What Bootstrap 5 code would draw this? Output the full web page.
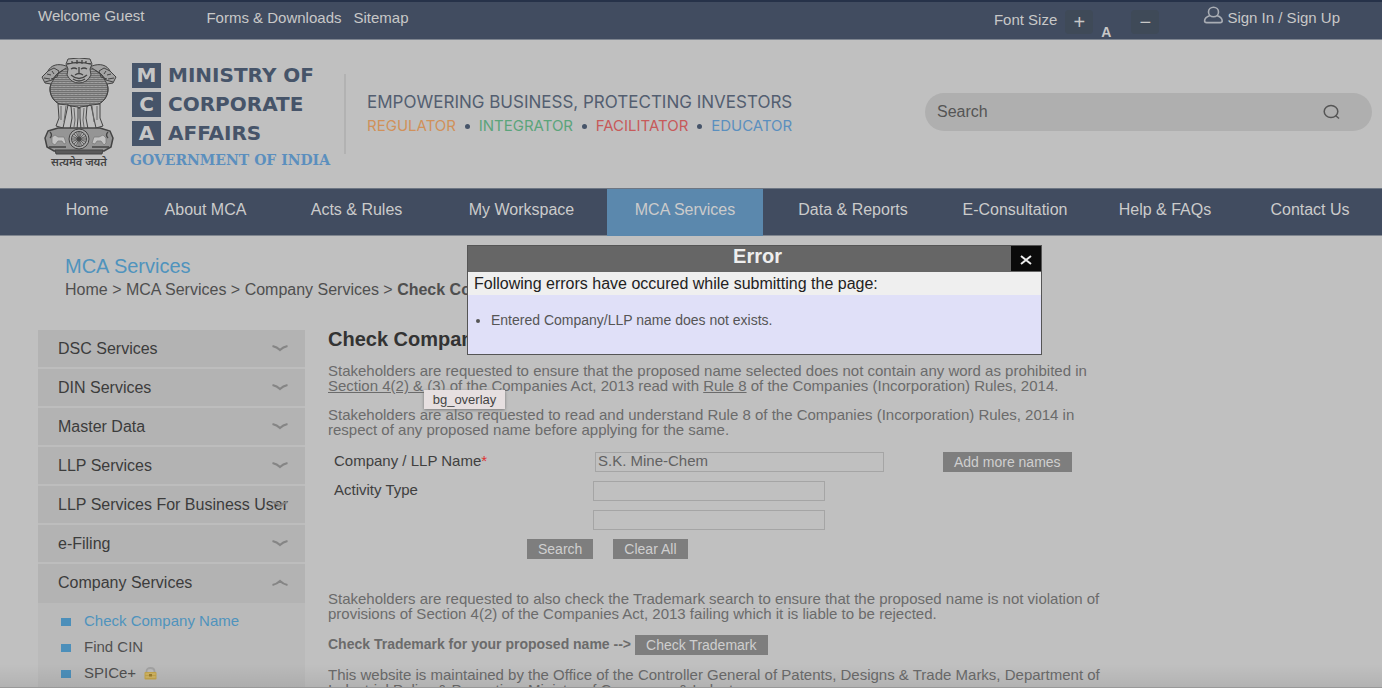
<!DOCTYPE html>
<html lang="en">
<head>
<meta charset="utf-8">
<meta name="viewport" content="width=device-width, initial-scale=1">
<title>Check Company Name - Ministry of Corporate Affairs</title>
<link href="https://cdn.jsdelivr.net/npm/bootstrap@5.3.0/dist/css/bootstrap.min.css" rel="stylesheet">
<style>
:root{--navy:#414c60;--grey:#c0c0c0;--sky:#4f93bd;--ink:#3f3f3f;--soft:#6b6b6b}
html{background:var(--grey)}
body{font-family:"Liberation Sans",Arial,sans-serif;font-size:15px;color:var(--soft);background:var(--grey);height:100vh;overflow:hidden;position:relative}
a{color:inherit;text-decoration:none}
.topbar{background:var(--navy);color:#c8c8c8;height:40px;border-top:2px solid #263249;border-bottom:1px solid #7d848f;line-height:20px;padding:0 42px 0 38px}
.top-links{margin-left:62px;padding-top:6px;gap:12px}
.size-btn{background:#3f4a58;border:0;border-radius:4px;color:#c8c8c8;width:28px;height:24px;line-height:24px;padding:0;font-size:20px}
.size-a{line-height:28px;font-size:14px}
.sign-link{margin-left:44px;padding-top:4px}
.sign-link span{padding-top:2px}
.masthead{height:148px;padding:0 10px 0 40px}
.emblem{width:78px;padding-top:18px}
.motto{font:600 11px/14px "Noto Sans Devanagari","Noto Sans",sans-serif;color:#444;text-align:center}
.wordmark{margin-left:12px;padding-top:23px}
.mca-tile{background:#465469;color:#c6c6c6;width:29px;height:25px;margin:0 7px 0 2px;font:700 20px/25px "DejaVu Sans",sans-serif;text-align:center}
.mca-word{color:#465469;font:700 20px/24px "DejaVu Sans",sans-serif;white-space:nowrap}
.gov{color:#5b8fbe;font:700 14px/20px "DejaVu Serif",serif;white-space:nowrap}
.rule{width:2px;height:80px;margin:34px 0 0 14px;background:#b2b2b2}
.slogan{padding:50px 0 0 21px}
.tagline{font:400 17px/24px Inter,sans-serif;color:#535e70;white-space:nowrap}
.roles{font:400 15px/24px Inter,sans-serif}
.dot{width:5px;height:5px;background:#465469;border-radius:50%}
.site-search{width:447px;height:38px;border-radius:19px;background:#afafaf;padding:0 32px 0 12px;margin-bottom:4px}
.site-search input{background:none;border:0;outline:0;font-size:16px;color:#555}
.site-search input::placeholder{color:#555;opacity:1}
.mainnav{background:var(--navy);height:48px;border-top:1px solid #6d7683;border-bottom:1px solid #80868f;display:grid;grid-template-columns:94fr 143fr 159fr 171fr 156fr 180fr 144fr 156fr 134fr;padding:0 5px 0 40px;color:#cbcbcb;font-size:16px}
.mainnav a{text-align:center;line-height:42px;white-space:nowrap}
.mainnav .current{background:#5b88ad;height:47px}
.crumb-area{padding:18px 0 0 65px}
.area-title{font-size:20px;line-height:24px;color:var(--sky);margin:0}
.crumbs{font-size:16px;line-height:24px;color:#4f4f4f;white-space:nowrap}
.layout{padding:28px 38px 0}
.sidebar{width:267px;background:#bababa}
.side-btn{display:flex;width:100%;height:39px;border:0;border-bottom:2px solid #bdbdbd;background:#b3b3b3;padding:0 17px 0 20px;font-size:16px;color:#3c3c3c;align-items:center;white-space:nowrap;position:relative}
.side-btn svg{position:absolute;right:17px}
.side-btn.opened{border-bottom-color:#b3b3b3}
.side-sub{list-style:none;margin:0;padding:5px 0 20px 23px;color:#505050;line-height:26px}
.side-sub li{display:flex;align-items:center}
.side-sub li::before{content:"";width:10px;height:8px;background:#4c8fba;margin:2px 13px 0 0}
.main-col{padding-left:23px}
.main-col h1{font-size:20px;line-height:18px;font-weight:700;color:#333;margin:0 0 15px}
.main-col p{line-height:15px;margin:0 0 14px;white-space:nowrap}
.main-col p.lead-in{margin-bottom:10px}
.main-col p a{text-decoration:underline}
.f-row{display:flex;align-items:center;height:29px;color:var(--ink)}
.f-label{width:265px;padding-left:6px}
.f-text{background:transparent;border:1px solid #a5a5a5;height:20px;width:232px;padding:0 2px;color:#626262;border-radius:0;outline:0}
.f-name{width:289px;margin:0 59px 0 2px}
.f-actions{padding-left:199px;gap:20px}
.grey-btn{background:#7e7e7e;color:#cfcfcf;border:0;height:20px;padding:0 11px;line-height:20px;font-size:14px;white-space:nowrap}
.tm-row{font-size:14px;margin:-1px 0 12px}
.after-form{padding-top:28px}
.err-box{position:absolute;left:467px;top:245px;width:575px;border:1px solid #555;background:#e0e0f8;color:#555}
.err-head{background:#666;height:26px;padding-left:36px}
.err-head h2{font-size:20px;line-height:20px;font-weight:700;color:#eee;margin:0}
.err-close{width:30px;height:25px;background:#0b0b0b;border:0;padding:0;line-height:20px}
.err-note{background:#efefef;color:#222;font-size:16px;line-height:23px;padding-left:6px}
.err-list{margin:0;padding:16px 0 24px 23px;font-size:14px;line-height:19px}
.tip{position:absolute;left:424px;top:390px;height:19px;width:81px;background:#e6dfe0;color:#444;font-size:13px;line-height:19px;text-align:center;box-shadow:0 1px 3px #777}
.shade{position:absolute;left:0;right:0;bottom:0;height:24px;background:linear-gradient(transparent,rgba(0,0,0,.07));border-bottom:1px solid #999;pointer-events:none}
</style>
</head>
<body>
<header>
  <div class="topbar d-flex">
    <span class="pt-1">Welcome Guest</span>
    <nav class="top-links d-flex flex-grow-1"><a href="#">Forms &amp; Downloads</a><a href="#">Sitemap</a></nav>
    <div class="d-flex">
      <span class="pt-2 me-2">Font Size</span>
      <button class="size-btn mt-2" type="button">+</button>
      <b class="size-a ms-2 me-1 pt-3">A</b>
      <button class="size-btn mt-2 ms-3" type="button">−</button>
    </div>
    <a href="#" class="sign-link d-flex"><svg width="20" height="20" viewBox="0 0 20 20" fill="none" stroke="#a9adb4" stroke-width="1.6"><ellipse cx="10.500" cy="6" rx="5" ry="4.800"/><path d="M7 9.400C3.500 10.600 1.600 12.300 1.600 15q0 1.600 2 1.600h13.600q2 0 2-1.600c0-2.700-1.700-4.400-5.400-5.600"/></svg><span class="ms-1">Sign In / Sign Up</span></a>
  </div>
  <div class="masthead d-flex">
    <div class="emblem">
      <svg width="78" height="98" viewBox="0 0 78 98" fill="none" stroke="#444" stroke-width="1">
        <defs><pattern id="curl" width="4" height="4" patternUnits="userSpaceOnUse"><path d="M0 .8q1 2 2 0q1 2 2 0M-1 2.800q1 2 2 0q1 2 2 0q1 2 2 0" stroke="#3d3d3d" stroke-width=".7"/></pattern></defs>
        <path d="M26 8C18 5 11 7 8 13L2 19l3 6 6 1c-2 5-1 11 3 16 5 5 10 7 14 5q11 6 22 0c4 2 9 0 14-5 4-5 5-11 3-16l6-1 3-6-6-6C67 7 60 5 52 8z" fill="#a3a3a3"/>
        <path d="M26 10L16 17 11 26c-2 5-1 11 3 16 5 5 10 7 14 5q11 6 22 0c4 2 9 0 14-5 4-5 5-11 3-16L62 17 52 10z" fill="url(#curl)"/>
        <path d="M28 1q11-2 22 0l2 5-2 5 1 6q-4 8-12 8t-12-8l1-6-2-5z" fill="#adadad"/>
        <path d="M27 6q12-3 24 0M31 11q3-2 6 0m4 0q3-2 6 0M39 9v6m-4 2q4-3 8 0m-12 0q8 7 16 0M33 21q6 4 12 0M32 3v3m5-4v4m5-4v4m4-3v3" stroke-width="1.300"/>
        <path d="M8 13l6-3 5 3-2 6-6 2M4 20l6 1M7 16l4 1M12 13l2 3M5 24l7-2 5-6 6-4M70 13l-6-3-5 3 2 6 6 2M74 20l-6 1M71 16l-4 1M66 13l-2 3M73 24l-7-2-5-6-6-4"/>
        <path d="M18 46l1 14-3 8 7 2 2-9 3-14zm13 2l1 12-2 11h7l1-11V49zm9 1v11l1 11h7l-2-11 1-12zm11-2l3 14 2 9 7-2-3-8 0-14z" fill="#bdbdbd"/>
        <path d="M21 48v14M26 48l-2 16M34 50l1 12-1 7M44 50l-1 12 1 7M57 48v14M52 48l2 16" stroke="#666"/>
        <path d="M8 73l10-3h42l10 3 3 7-2 9-7 4H14l-7-4-2-9z" fill="#959595" stroke-width="1.500"/>
        <circle cx="39" cy="81" r="10" fill="#aaa"/><circle cx="39" cy="81" r="7.500"/><circle cx="39" cy="81" r="2"/>
        <path d="M39 74v14M32 81h14M34 76l10 10M44 76L34 86M36.500 74.500l5 13M41.500 74.500l-5 13M32.500 78.500l13 5M45.500 78.500l-13 5" stroke-width=".7"/>
        <path d="M12 85v-6l3-2 3 2h6l2 6-2 1-2-3h-4l-3 4zM66 85v-5l-3-3-4 2h-5l-2 6 3 1 2-3h4l3 4z" fill="#c2c2c2" stroke="#777" stroke-width=".7"/>
        <path d="M10 74q3 3 0 6m58-6q-3 3 0 6M9 89h17m26 0h17" stroke-width="1.300"/>
        <path d="M15 92h48l-1 4H16z" fill="#5a5a5a"/>
      </svg>
      <div class="motto" lang="hi">सत्यमेव जयते</div>
    </div>
    <div class="wordmark">
      <div class="d-flex mb-1"><span class="mca-tile">M</span><span class="mca-word">MINISTRY OF</span></div>
      <div class="d-flex mb-1"><span class="mca-tile">C</span><span class="mca-word">CORPORATE</span></div>
      <div class="d-flex mb-1"><span class="mca-tile">A</span><span class="mca-word">AFFAIRS</span></div>
      <div class="gov">GOVERNMENT OF INDIA</div>
    </div>
    <div class="rule"></div>
    <div class="slogan flex-grow-1">
      <div class="d-inline-block">
        <div class="tagline">EMPOWERING BUSINESS, PROTECTING INVESTORS</div>
        <div class="roles d-flex justify-content-between align-items-center"><span style="color:#d0915a">REGULATOR</span><i class="dot"></i><span style="color:#5ba47b">INTEGRATOR</span><i class="dot"></i><span style="color:#c75a5a">FACILITATOR</span><i class="dot"></i><span style="color:#5b8fbe">EDUCATOR</span></div>
      </div>
    </div>
    <form class="site-search d-flex align-items-center align-self-center"><input class="flex-grow-1 p-0" type="text" placeholder="Search" aria-label="Search"><button type="button" class="border-0 bg-transparent p-0 d-flex" aria-label="Search"><svg width="17" height="16" viewBox="0 0 17 16" fill="none" stroke="#555" stroke-width="1.500"><ellipse cx="8" cy="7.500" rx="6.800" ry="6"/><path d="M12.500 11.500l3.500 3"/></svg></button></form>
  </div>
  <nav class="mainnav"><a href="#">Home</a><a href="#">About MCA</a><a href="#">Acts &amp; Rules</a><a href="#">My Workspace</a><a href="#" class="current">MCA Services</a><a href="#">Data &amp; Reports</a><a href="#">E-Consultation</a><a href="#">Help &amp; FAQs</a><a href="#">Contact Us</a></nav>
</header>
<div class="crumb-area">
  <h2 class="area-title">MCA Services</h2>
  <div class="crumbs"><a href="#">Home</a> &gt; <a href="#">MCA Services</a> &gt; <a href="#">Company Services</a> &gt; <b>Check Company Name</b></div>
</div>
<div class="layout d-flex">
  <aside class="sidebar flex-shrink-0">
    <button class="side-btn" type="button">DSC Services<svg width="16" height="7" viewBox="0 0 16 7" fill="none" stroke="#858585" stroke-width="2"><path d="M0.500 1q4.500 1 7.500 4q3-3 7.500-4"/></svg></button>
    <button class="side-btn" type="button">DIN Services<svg width="16" height="7" viewBox="0 0 16 7" fill="none" stroke="#858585" stroke-width="2"><path d="M0.500 1q4.500 1 7.500 4q3-3 7.500-4"/></svg></button>
    <button class="side-btn" type="button">Master Data<svg width="16" height="7" viewBox="0 0 16 7" fill="none" stroke="#858585" stroke-width="2"><path d="M0.500 1q4.500 1 7.500 4q3-3 7.500-4"/></svg></button>
    <button class="side-btn" type="button">LLP Services<svg width="16" height="7" viewBox="0 0 16 7" fill="none" stroke="#858585" stroke-width="2"><path d="M0.500 1q4.500 1 7.500 4q3-3 7.500-4"/></svg></button>
    <button class="side-btn" type="button">LLP Services For Business User<svg width="16" height="7" viewBox="0 0 16 7" fill="none" stroke="#858585" stroke-width="2"><path d="M0.500 1q4.500 1 7.500 4q3-3 7.500-4"/></svg></button>
    <button class="side-btn" type="button">e-Filing<svg width="16" height="7" viewBox="0 0 16 7" fill="none" stroke="#858585" stroke-width="2"><path d="M0.500 1q4.500 1 7.500 4q3-3 7.500-4"/></svg></button>
    <button class="side-btn opened" type="button">Company Services<svg width="16" height="7" viewBox="0 0 16 7" fill="none" stroke="#858585" stroke-width="2"><path d="M0.500 6q4.500-1 7.500-4q3 3 7.500 4"/></svg></button>
    <ul class="side-sub">
      <li><a href="#" style="color:var(--sky)">Check Company Name</a></li>
      <li><a href="#">Find CIN</a></li>
      <li><a href="#">SPICe+</a><svg class="ms-2" width="13" height="13" viewBox="0 0 13 13"><path d="M2.500 6V4.500q0-3.500 4-3.500t4 3.500V6" fill="none" stroke="#a2a2a2" stroke-width="1.800"/><rect x=".5" y="5" width="12" height="7.500" rx="1" fill="#c4a54c"/><path d="M1.500 7h10M1.500 10h10" stroke="#d9c078"/><rect x="5" y="7" width="3" height="2.500" fill="#9a7d2f"/></svg></li>
    </ul>
  </aside>
  <main class="main-col">
    <h1>Check Company Name</h1>
    <p>Stakeholders are requested to ensure that the proposed name selected does not contain any word as prohibited in<br><a href="#">Section 4(2) &amp; (3)</a> of the Companies Act, 2013 read with <a href="#">Rule 8</a> of the Companies (Incorporation) Rules, 2014.</p>
    <p class="lead-in">Stakeholders are also requested to read and understand Rule 8 of the Companies (Incorporation) Rules, 2014 in<br>respect of any proposed name before applying for the same.</p>
    <form>
      <div class="f-row"><label class="f-label" for="cname">Company / LLP Name<span style="color:#d33">*</span></label><input id="cname" class="f-text f-name" type="text" value="S.K. Mine-Chem"><button type="button" class="grey-btn">Add more names</button></div>
      <div class="f-row"><label class="f-label" for="act1">Activity Type</label><input id="act1" class="f-text" type="text"></div>
      <div class="f-row"><span class="f-label"></span><input class="f-text" type="text" aria-label="Activity Type 2"></div>
      <div class="f-row f-actions"><button type="button" class="grey-btn">Search</button><button type="button" class="grey-btn">Clear All</button></div>
    </form>
    <p class="after-form">Stakeholders are requested to also check the Trademark search to ensure that the proposed name is not violation of<br>provisions of Section 4(2) of the Companies Act, 2013 failing which it is liable to be rejected.</p>
    <div class="tm-row d-flex align-items-center"><b>Check Trademark for your proposed name --&gt;</b><button type="button" class="grey-btn ms-1">Check Trademark</button></div>
    <p>This website is maintained by the Office of the Controller General of Patents, Designs &amp; Trade Marks, Department of<br>Industrial Policy &amp; Promotion, Ministry of Commerce &amp; Industry.</p>
  </main>
</div>
<div class="shade"></div>
<div class="tip">bg_overlay</div>
<section class="err-box" role="dialog" aria-labelledby="errTitle">
  <div class="err-head d-flex"><h2 id="errTitle" class="flex-grow-1 text-center">Error</h2><button type="button" class="err-close" aria-label="Close"><svg width="12" height="10" viewBox="0 0 12 10" stroke="#eee" stroke-width="2"><path d="M1 1l10 8M11 1L1 9"/></svg></button></div>
  <div class="err-note">Following errors have occured while submitting the page:</div>
  <ul class="err-list"><li>Entered Company/LLP name does not exists.</li></ul>
</section>
<script src="https://cdn.jsdelivr.net/npm/bootstrap@5.3.0/dist/js/bootstrap.bundle.min.js"></script>
</body>
</html>
